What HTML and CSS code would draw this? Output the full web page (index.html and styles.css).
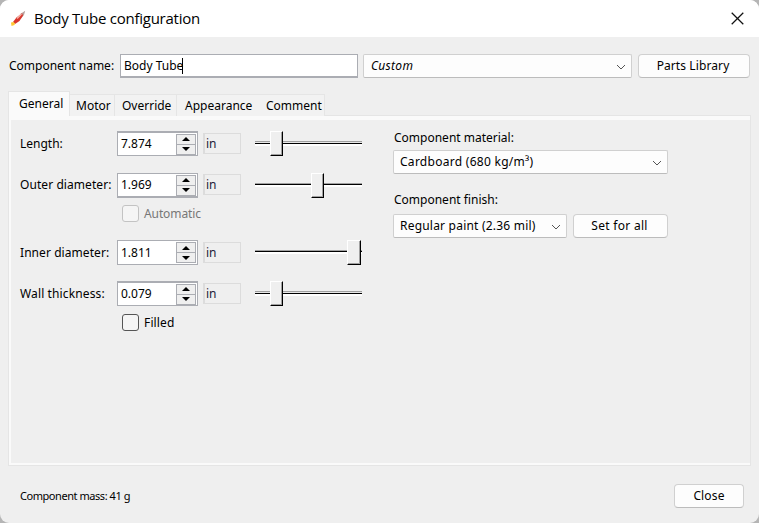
FILE: index.html
```html
<!DOCTYPE html>
<html lang="en">
<head>
<meta charset="utf-8">
<title>Body Tube configuration</title>
<link rel="stylesheet" href="styles.css">
</head>
<body>
<div class="window">
  <header class="titlebar">
    <svg class="rocket" width="17" height="17" viewBox="0 0 17 17">
      <path d="M15.200.8 11 3.500 8.500 8l2 1 3.500-4z" fill="#b9a09c"/>
      <path d="M12 3.200 6.500 7.500 3 12l2 2 4.500-3 3.500-5.500z" fill="#d9352c"/>
      <path d="M11.500 4 7 8.500" stroke="#f5b3a8" stroke-width="1.500"/>
      <path d="m3.500 12-2.500.5.500 3.500 3-1 .5-1.500z" fill="#ffc832"/>
    </svg>
    <h1 class="title">Body Tube configuration</h1>
    <svg class="close-icon" width="13" height="13" viewBox="0 0 13 13"><path d="m.7.7 11.600 11.600M12.300.7.7 12.300" stroke="#111" stroke-width="1.250"/></svg>
  </header>
  <div class="name-row">
    <span class="label t-name">Component name:</span>
    <div class="textfield"><span class="t-value">Body Tube</span><i class="caret"></i></div>
    <div class="combo preset"><em class="t-custom">Custom</em><svg class="chev" width="10" height="6" viewBox="0 0 10 6"><path d="m1 1 4 4 4-4" fill="none" stroke="#555"/></svg></div>
    <div class="button library"><span class="t-library">Parts Library</span></div>
  </div>
  <nav class="tabs">
    <div class="tab active"><span class="t-general">General</span></div>
    <div class="tab motor"><span class="t-motor">Motor</span></div>
    <div class="tab override"><span class="t-override">Override</span></div>
    <div class="tab appearance"><span class="t-appearance">Appearance</span></div>
    <div class="tab comment"><span class="t-comment">Comment</span></div>
  </nav>
  <main class="panel">
    <section class="dimensions">
      <div class="row">
        <span class="label t-length">Length:</span>
        <div class="spinner heavy-top"><span class="t-number">7.874</span><div class="steps"><i class="up"></i><i class="down"></i></div></div>
        <div class="unit">in</div>
        <div class="slider tall"><i class="thumb low"></i></div>
      </div>
      <div class="row outer">
        <span class="label t-outer">Outer diameter:</span>
        <div class="spinner heavy-bottom"><span class="t-number">1.969</span><div class="steps"><i class="up"></i><i class="down"></i></div></div>
        <div class="unit">in</div>
        <div class="slider"><i class="thumb mid"></i></div>
      </div>
      <div class="check disabled"><i class="box"></i><span class="t-automatic">Automatic</span></div>
      <div class="row inner">
        <span class="label t-inner">Inner diameter:</span>
        <div class="spinner"><span class="t-number">1.811</span><div class="steps"><i class="up"></i><i class="down"></i></div></div>
        <div class="unit">in</div>
        <div class="slider"><i class="thumb high"></i></div>
      </div>
      <div class="row wall">
        <span class="label t-wall">Wall thickness:</span>
        <div class="spinner heavy-top"><span class="t-number">0.079</span><div class="steps"><i class="up"></i><i class="down"></i></div></div>
        <div class="unit">in</div>
        <div class="slider tall"><i class="thumb low"></i></div>
      </div>
      <div class="check filled"><i class="box"></i><span class="t-filled">Filled</span></div>
    </section>
    <section class="material">
      <span class="label t-material">Component material:</span>
      <div class="combo"><span class="t-cardboard">Cardboard (680 kg/m³)</span><svg class="chev" width="10" height="6" viewBox="0 0 10 6"><path d="m1 1 4 4 4-4" fill="none" stroke="#555"/></svg></div>
      <span class="label finish-label t-finish">Component finish:</span>
      <div class="finish-row">
        <div class="combo finish"><span class="t-paint">Regular paint (2.36 mil)</span><svg class="chev" width="10" height="6" viewBox="0 0 10 6"><path d="m1 1 4 4 4-4" fill="none" stroke="#555"/></svg></div>
        <div class="button all"><span class="t-all">Set for all</span></div>
      </div>
    </section>
  </main>
  <footer class="footer">
    <span class="mass">Component mass: 41 g</span>
    <div class="button close"><span class="t-close">Close</span></div>
  </footer>
</div>
</body>
</html>
```
FILE: styles.css
```css
* { box-sizing: border-box; }
body { margin: 0; background: #b5b5b5; font: 12px/16px "Noto Sans", sans-serif; color: #000; }
.window { width: 759px; height: 523px; background: #efefef; border-radius: 9px; overflow: hidden; white-space: nowrap; }
.titlebar { height: 37px; background: #fff; display: flex; align-items: center; padding: 0 15px 0 10px; }
.title { font: 15px/20px "Open Sans", "Noto Sans", sans-serif; letter-spacing: -0.25px; margin: 0 auto 2px 7px; }
.close-icon { margin-bottom: 1px; }
.name-row { display: flex; height: 24px; margin: 17px 9px 0; align-items: center; }
.name-row .label { width: 111px; }
.textfield { width: 238px; height: 24px; background: #fff; border: 1px solid #abadb3; border-bottom-width: 2px; padding-left: 3px; display: flex; align-items: center; }
.caret { width: 1px; height: 16px; background: #000; margin-left: -1px; }
.combo, .button { height: 24px; background: #fdfdfd; border: 1px solid #d0d0d0; border-bottom-color: #bcbcbc; display: flex; align-items: center; }
.combo { border-radius: 2px; justify-content: space-between; padding: 0 5px 0 6px; }
.button { border-radius: 4px; justify-content: center; }
.preset { width: 269px; margin: 0 6px 0 5px; padding-left: 7px; }
.library { width: 112px; padding-right: 2px; }
.chev { margin-top: 1px; }
.tabs { display: flex; align-items: flex-end; height: 25px; margin: 13px 8px 0; }
.tab { height: 22px; background: #f2f2f2; border: 1px solid #e5e5e5; border-left: 0; border-bottom: 0; display: flex; align-items: center; }
.tab.active { height: 25px; width: 62px; background: #fafafa; border-left: 1px solid #e5e5e5; padding-left: 10px; }
.motor { width: 45px; padding-left: 6px; }
.override { width: 62px; padding-left: 7px; }
.appearance { width: 82px; padding-left: 8px; border-right: 0; }
.comment { width: 66px; padding-left: 7px; }
.panel { width: 743px; height: 351px; margin: -1px 8px 0; border: 1px solid #e5e5e5; box-shadow: inset 2px 0 #fafafa, inset 0 4px #fafafa, inset 0 -2px #fafafa; display: flex; padding: 15px 11px 0; }
.tab.active { z-index: 1; }
.dimensions { width: 373px; }
.row { display: flex; height: 25px; align-items: center; }
.row .label { width: 97px; }
.outer { margin-top: 17px; }
.outer .label { margin-bottom: 2px; }
.outer .unit { margin-bottom: 2px; }
.inner { margin-top: 18px; }
.wall { margin-top: 16px; }
.spinner { width: 81px; height: 25px; background: #fff; border: 1px solid #abadb3; display: flex; align-items: center; padding-left: 3px; }
.heavy-top { border-top-width: 2px; }
.heavy-bottom { border-bottom-width: 2px; }
.steps { width: 20px; height: 21px; margin: 0 1px 0 auto; background: #abadb3; display: grid; grid-template-rows: 9px 9px; gap: 1px; padding: 1px; }
.steps i { background: #efefef; display: flex; align-items: center; justify-content: center; }
.steps i::before { content: ""; border: solid transparent; border-width: 0 4px 4px; border-bottom-color: #000; }
.steps .down::before { border-width: 4px 4px 0; border-top-color: #000; }
.unit { width: 38px; height: 21px; margin: 0 14px 0 5px; border: 1px solid #dcdcdc; border-left-width: 2px; color: #222238; line-height: 19px; padding-left: 1px; }
.slider { width: 108px; height: 25px; display: flex; background: linear-gradient(#a0a0a0 0 1px, #000 1px 2px, #fff 2px 4px) 0 10px / 107px 4px no-repeat; }
.slider.tall { background: linear-gradient(#a0a0a0 0 1px, #e8e8e8 1px 2px, #000 2px 3px, #fff 3px 5px) 0 10px / 107px 5px no-repeat; }
.thumb { width: 13px; height: 25px; background: #efefef; border: 1px solid #fff; border-right-color: #000; border-bottom-color: #000; box-shadow: inset -1px -1px #a0a0a0; }
.low { margin-left: 15px; }
.mid { margin-left: 56px; }
.high { margin-left: 92px; width: 14px; }
.check { display: flex; align-items: center; height: 17px; margin: 7px 0 0 102px; gap: 5px; }
.box { width: 17px; height: 17px; border: 1px solid #555; border-radius: 3px; background: #f5f5f5; }
.filled { margin-top: 8px; }
.disabled { color: #777; }
.disabled .box { border-color: #c3c3c3; }
.material { width: 275px; display: flex; flex-direction: column; align-items: stretch; }
.material > .label { height: 16px; margin: -1px 0 4px 1px; }
.material .finish-label { margin: 18px 0 6px 1px; }
.finish-row { display: flex; justify-content: space-between; }
.finish { width: 174px; padding-right: 5px; }
.all { width: 95px; padding-right: 2px; }
.footer { display: flex; justify-content: space-between; align-items: center; padding: 18px 15px 0 20px; }
.close { width: 70px; }
.mass { font-size: 11px; letter-spacing: -0.45px; }
.t-custom { letter-spacing: 0.3px; }
.t-library { letter-spacing: 0.1px; }
.t-cardboard { letter-spacing: 0.28px; }
.t-paint { letter-spacing: 0.21px; }
.t-all { letter-spacing: 0.3px; }
.t-close { letter-spacing: 0.15px; }
.t-outer, .t-inner { letter-spacing: 0.07px; }
.t-wall { letter-spacing: 0.13px; }
.t-automatic { letter-spacing: -0.1px; }
.t-filled { letter-spacing: 0.15px; }
```
